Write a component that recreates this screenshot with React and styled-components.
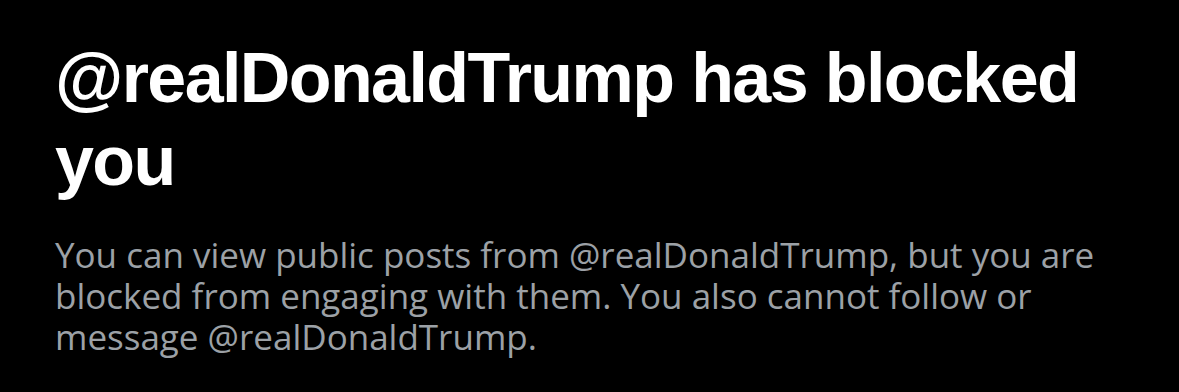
import React from 'react';
import styled, { createGlobalStyle } from 'styled-components';

const GlobalStyle = createGlobalStyle`
  html, body {
    margin: 0;
    padding: 0;
    background: #000;
  }
`;

const Page = styled.div`
  width: 1179px;
  height: 392px;
  box-sizing: border-box;
  padding: 37px 40px 0 55px;
  background-color: #000;
  display: flex;
  flex-direction: column;
  gap: 31px;
  overflow: hidden;
`;

const Title = styled.h1`
  margin: 0;
  color: #fff;
  font-family: "Liberation Sans", Arial, sans-serif;
  font-weight: 700;
  font-size: 70px;
  line-height: 83px;
  letter-spacing: -1.6px;
`;

const Message = styled.p`
  margin: 0;
  width: 1080px;
  color: #9ca1a6;
  font-family: "Open Sans", "Noto Sans", sans-serif;
  font-size: 35px;
  line-height: 41px;
`;

export default function App() {
  return (
    <>
      <GlobalStyle />
      <Page>
        <Title>@realDonaldTrump has blocked you</Title>
        <Message>
          You can view public posts from @realDonaldTrump, but you are blocked from engaging
          with them. You also cannot follow or message @realDonaldTrump.
        </Message>
      </Page>
    </>
  );
}
